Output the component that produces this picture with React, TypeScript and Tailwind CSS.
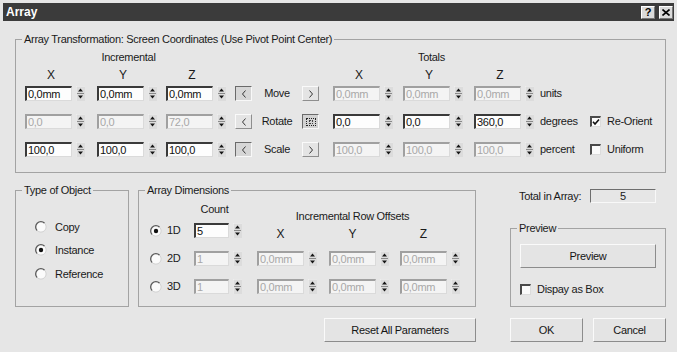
import React from "react";
import clsx from "clsx";

// classic win32 style bits
function Field({ v, dis, w = "w-[47px]" }: { v: string; dis?: boolean; w?: string }) {
  return (
    <div className="flex items-center">
      <div
        className={clsx(
          "h-[15px] border-l-2 border-t-2 border-r border-b border-r-[#dadada] border-b-[#dadada] pl-[1px] leading-[12px] overflow-hidden whitespace-nowrap",
          w,
          dis
            ? "border-l-[#a0a0a0] border-t-[#a0a0a0] bg-[#f4f4f4] text-[#a8a8a8]"
            : "border-l-[#3a3a3a] border-t-[#3a3a3a] bg-[#fdfdfd] text-[#111]"
        )}
      >
        {v}
      </div>
      <Spinner />
    </div>
  );
}

function Spinner() {
  return (
    <svg width="9" height="15" viewBox="0 0 9 15" className="ml-[4px] shrink-0">
      <rect x="0" y="0" width="9" height="15" fill="#dcdcdc" />
      <path d="M0 0H9M0 0V15" stroke="#f4f4f4" />
      <path d="M4.5 2.5L7 5.5H2Z" fill="#151515" />
      <path d="M1 7.5H8" stroke="#8a8a8a" />
      <path d="M2 9.5H7L4.5 12.5Z" fill="#151515" />
    </svg>
  );
}

function ArrowBtn({ dir, pressed }: { dir: "l" | "r"; pressed?: boolean }) {
  return (
    <div
      className={clsx(
        "w-[17px] h-[15px] flex items-center justify-center border",
        pressed
          ? "border-t-[#6a6a6a] border-l-[#6a6a6a] border-r-[#f8f8f8] border-b-[#f8f8f8] bg-[#d6d6d6]"
          : "border-t-[#fafafa] border-l-[#fafafa] border-r-[#8e8e8e] border-b-[#8e8e8e] bg-[#e4e4e4]"
      )}
    >
      <svg width="6" height="8" viewBox="0 0 6 8">
        {dir === "l" ? (
          <path d="M4.5 0.5L1.5 4L4.5 7.5" fill="none" stroke="#222" strokeWidth="0.9" />
        ) : (
          <path d="M1.5 0.5L4.5 4L1.5 7.5" fill="none" stroke="#222" strokeWidth="0.9" />
        )}
      </svg>
    </div>
  );
}

function Radio({ on }: { on?: boolean }) {
  return (
    <svg width="12" height="12" viewBox="0 0 12 12" className="shrink-0">
      <circle cx="6" cy="6" r="5" fill="#fbfbfb" />
      <path d="M2.2 9.6A5 5 0 0 1 9.6 2.2" fill="none" stroke="#5a5a5a" strokeWidth="1.3" />
      <path d="M9.6 2.2A5 5 0 0 1 2.2 9.6" fill="none" stroke="#d2d2d2" strokeWidth="1" />
      {on && <circle cx="6" cy="6" r="2.2" fill="#111" />}
    </svg>
  );
}

function Check({ on }: { on?: boolean }) {
  return (
    <div className="w-[11px] h-[11px] shrink-0 border-l-2 border-t-2 border-r border-b border-l-[#4a4a4a] border-t-[#4a4a4a] border-r-[#dcdcdc] border-b-[#dcdcdc] bg-[#fbfbfb] flex items-center justify-center">
      {on && (
        <svg width="8" height="8" viewBox="0 0 8 8">
          <path d="M1 3.8L3 6L7 1.5" fill="none" stroke="#111" strokeWidth="1.6" />
        </svg>
      )}
    </div>
  );
}

function Btn({ label, w }: { label: string; w: string }) {
  return (
    <div
      className={clsx(
        "h-[24px] flex items-center justify-center border border-t-[#fafafa] border-l-[#fafafa] border-r-[#8c8c8c] border-b-[#8c8c8c] bg-[#e4e4e4] text-[#151515]",
        w
      )}
    >
      {label}
    </div>
  );
}

const legend = "ml-[6px] px-[2px] leading-[12px] text-[#1a1a1a]";

type Row = { label: string; inc: [string, boolean][]; tot: [string, boolean][]; unit: string; lp?: boolean; rMode: "btn" | "box" };

const rows: Row[] = [
  { label: "Move", inc: [["0,0mm", false], ["0,0mm", false], ["0,0mm", false]], tot: [["0,0mm", true], ["0,0mm", true], ["0,0mm", true]], unit: "units", lp: true, rMode: "btn" },
  { label: "Rotate", inc: [["0,0", true], ["0,0", true], ["72,0", true]], tot: [["0,0", false], ["0,0", false], ["360,0", false]], unit: "degrees", rMode: "box" },
  { label: "Scale", inc: [["100,0", false], ["100,0", false], ["100,0", false]], tot: [["100,0", true], ["100,0", true], ["100,0", true]], unit: "percent", lp: true, rMode: "btn" },
];

const incW = ["w-[72px]", "w-[69px]", "w-[69px]"];
const totW = ["w-[70px]", "w-[71px]", "w-[66px]"];

export default function App() {
  return (
    <div className="w-[677px] h-[352px] overflow-hidden bg-[#e6e6e6] font-['Liberation_Sans',Arial,sans-serif] text-[11px] tracking-[-0.3px] text-[#1a1a1a] flex flex-col">
      {/* title bar */}
      <div className="mx-[3px] mt-[3px] h-[18px] bg-[#3b3b3b] flex items-center justify-between pl-[3px] pr-[1px]">
        <span className="text-white font-bold text-[12px] leading-[14px] tracking-normal">Array</span>
        <div className="flex gap-[4px]">
          <div className="w-[14px] h-[13px] bg-[#dadada] border border-t-white border-l-white border-r-[#777] border-b-[#777] flex items-center justify-center font-bold leading-none text-black">?</div>
          <div className="w-[14px] h-[13px] bg-[#dadada] border border-t-white border-l-white border-r-[#777] border-b-[#777] flex items-center justify-center">
            <svg width="8" height="7" viewBox="0 0 8 7">
              <path d="M0.5 0.5L7.5 6.5M7.5 0.5L0.5 6.5" stroke="#000" strokeWidth="1.6" />
            </svg>
          </div>
        </div>
      </div>

      {/* Array transformation */}
      <fieldset className="ml-[15px] mt-[12px] w-[651px] h-[140px] border border-[#a3a3a3]">
        <legend className={legend}>Array Transformation: Screen Coordinates (Use Pivot Point Center)</legend>
        <div className="pl-[9px] pt-[6px]">
          <div className="flex h-[12px] leading-[12px]">
            <div className="w-[210px] text-center pr-[3px]">Incremental</div>
            <div className="w-[98px]" />
            <div className="w-[207px] text-center pr-[10px]">Totals</div>
          </div>
          <div className="flex h-[12px] leading-[12px] mt-[6px] text-[12px] tracking-normal">
            {["X", "Y", "Z"].map((a, i) => (
              <div key={a} className={incW[i]}>
                <div className="w-[52px] text-center">{a}</div>
              </div>
            ))}
            <div className="w-[98px]" />
            {["X", "Y", "Z"].map((a, i) => (
              <div key={a} className={totW[i]}>
                <div className="w-[52px] text-center">{a}</div>
              </div>
            ))}
          </div>
          <div className="mt-[5px] flex flex-col gap-[13px]">
            {rows.map((r) => (
              <div key={r.label} className="flex items-center h-[15px]">
                {r.inc.map(([v, d], i) => (
                  <div key={i} className={incW[i]}>
                    <Field v={v} dis={d} />
                  </div>
                ))}
                <ArrowBtn dir="l" pressed={r.lp} />
                <div className="w-[50px] text-center leading-[15px]">{r.label}</div>
                <div className="w-[31px]">
                  {r.rMode === "btn" ? (
                    <div className="w-[17px]">
                      <ArrowBtn dir="r" />
                    </div>
                  ) : (
                    <div className="w-[17px] h-[15px] border border-t-[#6a6a6a] border-l-[#6a6a6a] border-r-[#f8f8f8] border-b-[#f8f8f8] bg-[#d2d2d2] flex items-center justify-center">
                      <div className="w-[10px] h-[8px] border border-dotted border-[#222] flex items-center justify-center">
                        <div className="w-[4px] h-[4px] border border-dotted border-[#444]" />
                      </div>
                    </div>
                  )}
                </div>
                {r.tot.map(([v, d], i) => (
                  <div key={i} className={totW[i]}>
                    <Field v={v} dis={d} />
                  </div>
                ))}
                <div className="w-[50px] leading-[15px]">{r.unit}</div>
                {r.label === "Rotate" && (
                  <div className="flex items-center gap-[6px]">
                    <Check on />
                    <span>Re-Orient</span>
                  </div>
                )}
                {r.label === "Scale" && (
                  <div className="flex items-center gap-[6px]">
                    <Check />
                    <span>Uniform</span>
                  </div>
                )}
              </div>
            ))}
          </div>
        </div>
      </fieldset>

      {/* lower section */}
      <div className="flex mt-[11px] ml-[15px]">
        <fieldset className="w-[114px] h-[123px] border border-[#a3a3a3]">
          <legend className={legend}>Type of Object</legend>
          <div className="pl-[19px] pt-[24px] flex flex-col">
            {[
              ["Copy", false],
              ["Instance", true],
              ["Reference", false],
            ].map(([l, on], i) => (
              <div key={l as string} className={clsx("flex items-center gap-[8px] h-[14px]", i === 1 && "mt-[9px]", i === 2 && "mt-[10px]")}>
                <Radio on={on as boolean} />
                <span>{l as string}</span>
              </div>
            ))}
          </div>
        </fieldset>

        <fieldset className="ml-[9px] w-[338px] h-[123px] border border-[#a3a3a3]">
          <legend className={legend}>Array Dimensions</legend>
          <div className="flex pl-[11px]">
            <div className="flex flex-col">
              <div className="mt-[7px] h-[12px] leading-[12px] flex">
                <div className="w-[44px]" />
                <div className="w-[43px] text-center pr-[2px]">Count</div>
              </div>
              {[
                ["1D", "5", false, true],
                ["2D", "1", true, false],
                ["3D", "1", true, false],
              ].map(([l, v, d, on], i) => (
                <div key={l as string} className={clsx("flex items-center h-[15px]", i === 0 ? "mt-[8px]" : "mt-[13px]")}>
                  <div className="w-[44px] flex items-center gap-[5px]">
                    <Radio on={on as boolean} />
                    <span>{l as string}</span>
                  </div>
                  <Field v={v as string} dis={d as boolean} w="w-[35px]" />
                </div>
              ))}
            </div>
            <div className="ml-[15px] flex flex-col">
              <div className="mt-[14px] h-[12px] leading-[12px] text-center pr-[12px]">Incremental Row Offsets</div>
              <div className="mt-[6px] h-[12px] leading-[12px] flex text-[12px] tracking-normal">
                {["X", "Y", "Z"].map((a, i) => (
                  <div key={a} className={i === 2 ? "w-[60px]" : i === 1 ? "w-[71px]" : "w-[72px]"}>
                    <div className="w-[47px] text-center">{a}</div>
                  </div>
                ))}
              </div>
              {[0, 1].map((r) => (
                <div key={r} className={clsx("flex h-[15px]", r === 0 ? "mt-[11px]" : "mt-[13px]")}>
                  <div className="w-[72px]">
                    <Field v="0,0mm" dis />
                  </div>
                  <div className="w-[71px]">
                    <Field v="0,0mm" dis />
                  </div>
                  <div>
                    <Field v="0,0mm" dis />
                  </div>
                </div>
              ))}
            </div>
          </div>
        </fieldset>

        <div className="ml-[34px] w-[156px] flex flex-col">
          <div className="mt-[5px] flex items-center pl-[9px] h-[14px]">
            <span className="w-[71px] whitespace-nowrap">Total in Array:</span>
            <div className="w-[66px] h-[14px] border-l border-t border-r border-b border-l-[#6e6e6e] border-t-[#6e6e6e] border-r-[#f8f8f8] border-b-[#f8f8f8] flex items-center justify-center leading-none">5</div>
          </div>
          <fieldset className="mt-[19px] w-[156px] h-[85px] border border-[#a3a3a3]">
            <legend className={legend}>Preview</legend>
            <div className="pl-[9px] pt-[10px] flex flex-col">
              <Btn label="Preview" w="w-[136px]" />
              <div className="mt-[13px] flex items-center gap-[6px]">
                <Check />
                <span>Dispay as Box</span>
              </div>
            </div>
          </fieldset>
        </div>
      </div>

      {/* buttons */}
      <div className="flex mt-[11px] ml-[324px]">
        <Btn label="Reset All Parameters" w="w-[152px]" />
        <div className="ml-[34px]">
          <Btn label="OK" w="w-[73px]" />
        </div>
        <div className="ml-[10px]">
          <Btn label="Cancel" w="w-[73px]" />
        </div>
      </div>
    </div>
  );
}
